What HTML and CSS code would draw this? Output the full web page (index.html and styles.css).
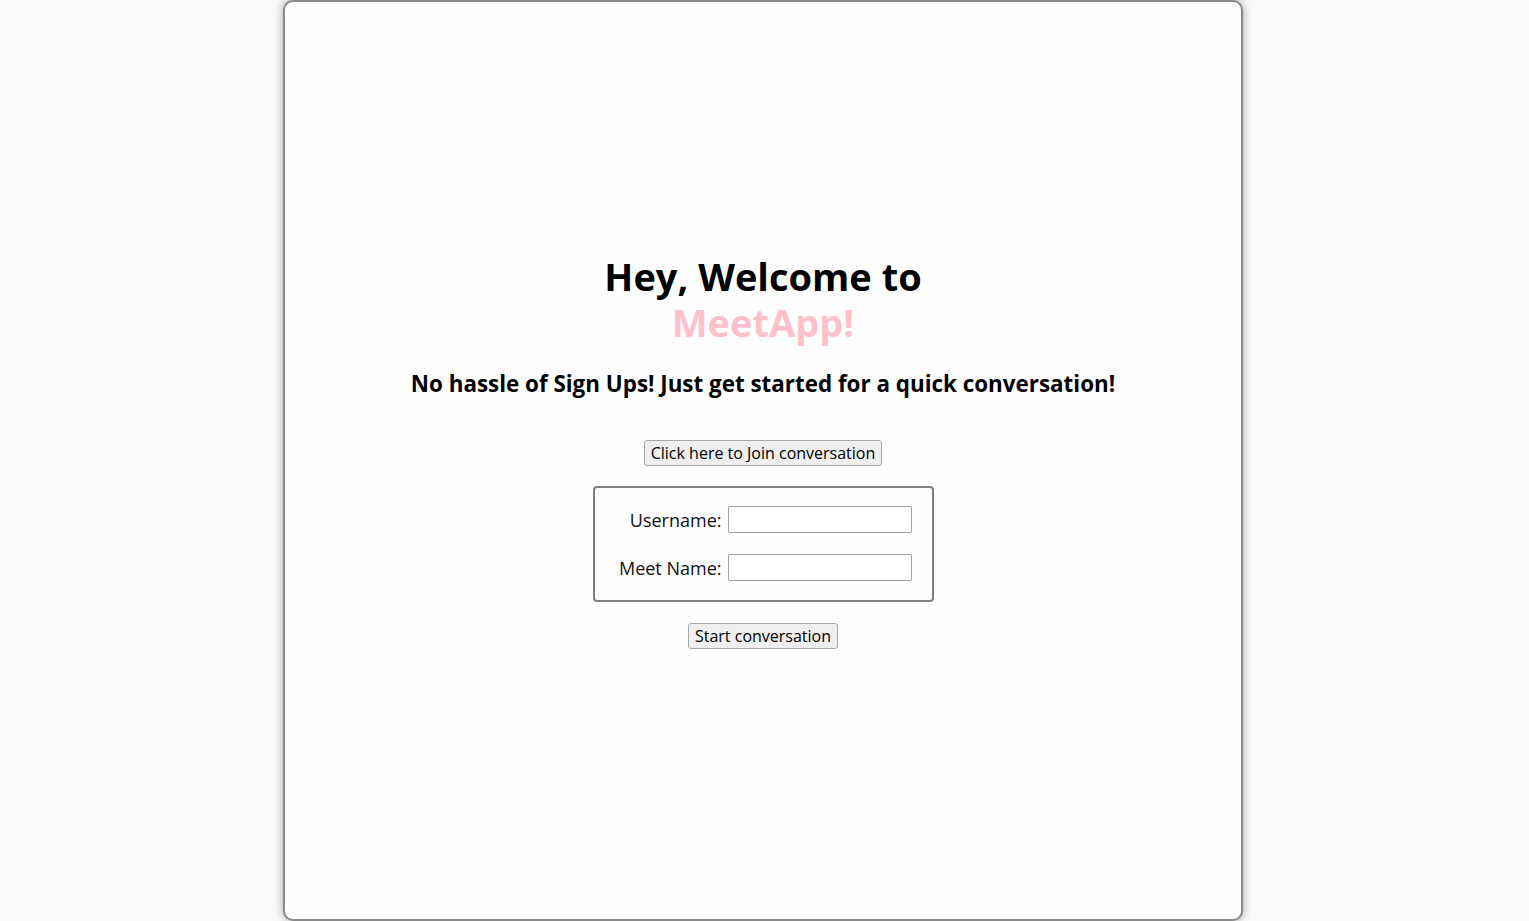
FILE: index.html
```html
<!DOCTYPE html>
<html lang="en">
<head>
<meta charset="utf-8">
<title>MeetApp</title>
<link rel="stylesheet" href="styles.css">
</head>
<body>
<main class="card">
  <h1 class="title"><span class="line">Hey, Welcome to</span><span class="line brand">MeetApp!</span></h1>
  <h3 class="subtitle">No hassle of Sign Ups! Just get started for a quick conversation!</h3>
  <button class="btn join">Click here to Join conversation</button>
  <fieldset class="form-box">
    <div class="row"><label for="u">Username:</label><input id="u" type="text"></div>
    <div class="row"><label for="m">Meet Name:</label><input id="m" type="text"></div>
  </fieldset>
  <button class="btn start">Start conversation</button>
</main>
</body>
</html>
```
FILE: styles.css
```css
html, body {
  margin: 0;
  padding: 0;
  height: 100%;
}
body {
  background: #fafafa;
  font-family: "Open Sans", "Noto Sans", sans-serif;
  color: #000;
  overflow: hidden;
}
.card {
  box-sizing: border-box;
  width: 960px;
  height: 921px;
  margin: 0 0 0 283px;
  background: #fefefe;
  border: 2px solid #8a8a8a;
  border-radius: 10px;
  box-shadow: 0 0 10px rgba(0,0,0,0.35);
  display: flex;
  flex-direction: column;
  align-items: center;
  justify-content: flex-start;
  padding-top: 251px;
}
.title {
  margin: 0;
  font-size: 38px;
  line-height: 46px;
  font-weight: 700;
  text-align: center;
}
.title .line {
  display: block;
  height: 46px;
}
.brand {
  color: #ffc0cb;
}
.subtitle {
  margin: 25px 0 0;
  font-size: 22.4px;
  line-height: 28px;
  font-weight: 700;
}
.btn {
  font-family: "Open Sans", "Noto Sans", sans-serif;
  font-size: 16px;
  line-height: 20px;
  color: #000;
  background: #efefef;
  border: 1px solid #a8a8a8;
  border-radius: 3px;
  padding: 2px 6px;
}
.join {
  margin-top: 42px;
}
.form-box {
  box-sizing: border-box;
  width: 341px;
  margin: 20px 0 0;
  padding: 18px 20px 19px 18px;
  border: 2px solid #7f7f7f;
  border-radius: 4px;
  display: flex;
  flex-direction: column;
  gap: 21px;
}
.row {
  display: flex;
  justify-content: flex-end;
  align-items: center;
  gap: 6px;
}
.row label {
  font-size: 18px;
  color: #111;
}
.row input {
  box-sizing: border-box;
  width: 184px;
  height: 27px;
  border: 1px solid #a0a0a0;
  border-radius: 2px;
  background: #fff;
}
.start {
  margin-top: 21px;
}
```
